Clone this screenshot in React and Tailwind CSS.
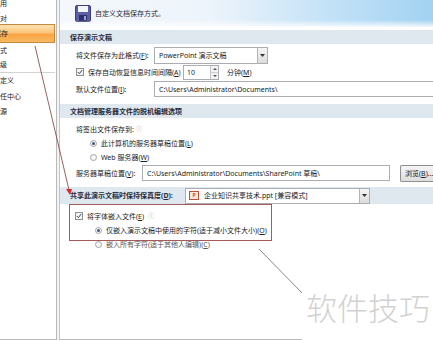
import React from "react";

function Check({ checked = true }) {
  return (
    <span className="inline-flex w-[8px] h-[8px] border border-[#8e8f8f] bg-[#f4f4f4] items-center justify-center shrink-0">
      {checked && (
        <svg width="6" height="6" viewBox="0 0 6 6">
          <path d="M0.8 3 L2.4 4.6 L5.2 1" stroke="#3a4a6a" strokeWidth="1" fill="none" />
        </svg>
      )}
    </span>
  );
}

function Radio({ checked }) {
  return (
    <span className="inline-flex w-[7px] h-[7px] rounded-full border border-[#a4a4a4] bg-[#f6f6f6] items-center justify-center shrink-0">
      {checked && <span className="w-[3px] h-[3px] rounded-full bg-[#3d5a80]" />}
    </span>
  );
}

function DropArrow() {
  return (
    <span className="w-[10px] h-full border-l border-[#b5b5b5] bg-[linear-gradient(180deg,#f6f6f6,#dcdcdc)] flex items-center justify-center shrink-0">
      <svg width="5" height="3" viewBox="0 0 5 3">
        <path d="M0 0 H5 L2.5 3 Z" fill="#333" />
      </svg>
    </span>
  );
}

function SectionHeader({ children, className = "" }) {
  return (
    <div className={"h-[14px] bg-[#dfe7ef] flex items-center pl-[10px] font-bold text-[#1e2c40] " + className}>
      {children}
    </div>
  );
}

function Floppy() {
  return (
    <svg width="16" height="17" viewBox="0 0 16 17">
      <rect x="0.5" y="0.5" width="15" height="16" rx="1.5" fill="#5b5fa6" stroke="#3c3f7c" />
      <rect x="3" y="1" width="10" height="6" fill="#f4f4fb" />
      <rect x="4" y="10" width="8" height="6" fill="#2f3166" />
      <rect x="9" y="11" width="2" height="4" fill="#9aa0d8" />
    </svg>
  );
}

export default function App() {
  return (
    <div className="relative w-[433px] h-[340px] overflow-hidden bg-white flex text-[7px] leading-none text-[#222] font-[family-name:Noto_Sans,Noto_Sans_CJK_SC,sans-serif]">
      {/* left menu */}
      <div className="w-[57px] h-full border-r border-b border-[#b9b9b9] bg-white flex flex-col overflow-hidden shrink-0">
        <div className="-mt-[4px] h-[14px] flex items-center -ml-[7px] whitespace-nowrap">常用</div>
        <div className="mt-px h-[14px] flex items-center -ml-[7px] whitespace-nowrap">校对</div>
        <div className="-mt-px h-[19px] w-[56px] -ml-[1px] border border-[#c58a3c] bg-[linear-gradient(180deg,#fde3b4_0%,#fbc57a_45%,#f7a443_55%,#f9b963_100%)] flex items-center shrink-0">
          <span className="-ml-[6px] whitespace-nowrap">保存</span>
        </div>
        <div className="h-[14px] flex items-center -ml-[7px] whitespace-nowrap">版式</div>
        <div className="h-[14px] flex items-center -ml-[7px] whitespace-nowrap">高级</div>
        <div className="mt-[1px] h-px w-[55px] bg-[#d3d3d3] shrink-0" />
        <div className="h-[14px] flex items-center -ml-[7px] whitespace-nowrap">自定义</div>
        <div className="mt-[2px] h-[14px] flex items-center -ml-[7px] whitespace-nowrap">信任中心</div>
        <div className="mt-[1px] h-[14px] flex items-center -ml-[7px] whitespace-nowrap">资源</div>
      </div>
      <div className="w-[3px] h-full bg-[#f3f3f3] border-r border-[#c4c4c4] shrink-0" />

      {/* right panel */}
      <div className="flex-1 min-w-0 h-full flex flex-col border-b border-[#b9b9b9] bg-white">
        <div className="h-[27px] bg-[linear-gradient(90deg,#f4f8fc_0%,#edf4fb_40%,#c6e3f7_70%,#a2d2f2_100%)] relative flex items-center pl-[15px] gap-[4px]">
          <div className="absolute left-0 right-0 bottom-0 h-[7px] bg-[linear-gradient(180deg,rgba(255,255,255,0),rgba(255,255,255,0.85))]" />
          <Floppy />
          <span className="relative text-[#1f2a3a]">自定义文档保存方式。</span>
        </div>

        <SectionHeader className="mt-[3px]">保存演示文稿</SectionHeader>

        <div className="mt-[3px] h-[17px] flex items-center pl-[16px]">
          <span className="w-[78px]">将文件保存为此格式(<u>F</u>):</span>
          <div className="w-[114px] h-[17px] border border-[#abadb3] bg-white flex items-center">
            <span className="flex-1 pl-[4px]">PowerPoint 演示文稿</span>
            <DropArrow />
          </div>
        </div>

        <div className="h-[16px] flex items-center pl-[16px]">
          <Check />
          <span className="ml-[4px] w-[95px]">保存自动恢复信息时间间隔(<u>A</u>)</span>
          <div className="w-[36px] h-[15px] border border-[#abadb3] bg-white flex items-center">
            <span className="flex-1 pl-[3px]">10</span>
            <span className="w-[8px] h-full border-l border-[#c8c8c8] flex flex-col">
              <span className="flex-1 flex items-center justify-center border-b border-[#d0d0d0] bg-[#f2f2f2]">
                <svg width="4" height="2" viewBox="0 0 4 2"><path d="M0 2 H4 L2 0 Z" fill="#555" /></svg>
              </span>
              <span className="flex-1 flex items-center justify-center bg-[#f2f2f2]">
                <svg width="4" height="2" viewBox="0 0 4 2"><path d="M0 0 H4 L2 2 Z" fill="#555" /></svg>
              </span>
            </span>
          </div>
          <span className="ml-[8px]">分钟(<u>M</u>)</span>
        </div>

        <div className="mt-[1px] h-[16px] flex items-center pl-[16px]">
          <span className="w-[78px] shrink-0">默认文件位置(<u>I</u>):</span>
          <div className="flex-1 h-[16px] border border-[#abadb3] border-r-0 bg-white flex items-center pl-[4px] whitespace-nowrap">
            C:\Users\Administrator\Documents\
          </div>
        </div>

        <SectionHeader className="mt-[7px]">文档管理服务器文件的脱机编辑选项</SectionHeader>

        <div className="mt-[4px] h-[14px] flex items-center pl-[16px] gap-[2px]">
          <span>将签出文件保存到:</span>
          <span className="text-[#9aa6b6] text-[6px]">ⓘ</span>
        </div>
        <div className="h-[14px] flex items-center pl-[30px] gap-[4px]">
          <Radio checked />
          <span>此计算机的服务器草稿位置(<u>L</u>)</span>
        </div>
        <div className="h-[14px] flex items-center pl-[30px] gap-[4px]">
          <Radio />
          <span>Web 服务器(<u>W</u>)</span>
        </div>

        <div className="mt-[1px] h-[16px] flex items-center pl-[16px]">
          <span className="w-[66px] shrink-0">服务器草稿位置(<u>V</u>):</span>
          <div className="w-[248px] shrink-0 h-[16px] border border-[#abadb3] bg-white flex items-center pl-[4px] whitespace-nowrap">
            C:\Users\Administrator\Documents\SharePoint 草稿\
          </div>
          <div className="ml-[10px] flex-1 min-w-0 h-[17px] border border-[#8f8f8f] border-r-0 rounded-l-[2px] bg-[linear-gradient(180deg,#f5f5f5,#dedede)] flex items-center pl-[4px] whitespace-nowrap overflow-hidden">
            浏览(<u>B</u>)...
          </div>
        </div>

        <div className="mt-[6px] h-[17px] bg-[#dfe7ef] flex items-center pl-[10px]">
          <span className="w-[115px] font-bold text-[#1e2c40] whitespace-nowrap">共享此演示文稿时保持保真度(<u>D</u>):</span>
          <div className="w-[185px] h-[16px] border border-[#abadb3] bg-white flex items-center">
            <span className="ml-[3px] w-[10px] h-[9px] border border-[#c0503a] bg-[#fbe6dc] flex items-center justify-center text-[5px] text-[#c0503a] font-bold">P</span>
            <span className="flex-1 pl-[5px]">企业知识共享技术.ppt [兼容模式]</span>
            <DropArrow />
          </div>
        </div>

        <div className="mt-[5px] h-[14px] flex items-center pl-[15px] gap-[4px]">
          <Check />
          <span>将字体嵌入文件(<u>E</u>)</span>
          <span className="text-[#9aa6b6] text-[6px]">ⓘ</span>
        </div>
        <div className="h-[15px] flex items-center pl-[35px] gap-[4px]">
          <Radio checked />
          <span>仅嵌入演示文稿中使用的字符(适于减小文件大小)(<u>O</u>)</span>
        </div>
        <div className="h-[13px] flex items-center pl-[35px] gap-[4px] text-[#555]">
          <Radio />
          <span>嵌入所有字符(适于其他人编辑)(<u>C</u>)</span>
        </div>
      </div>

      {/* red annotation box */}
      <div className="absolute left-[69px] top-[204px] w-[203px] h-[37px] border border-[#a65a5a] pointer-events-none" />

      {/* annotation lines */}
      <svg className="absolute left-0 top-0 pointer-events-none" width="433" height="340" viewBox="0 0 433 340">
        <line x1="35" y1="46" x2="69" y2="190" stroke="#7a3a3a" strokeWidth="0.8" />
        <path d="M66 189 L72 189 L70 195 Z" fill="#d92a2a" />
        <line x1="259" y1="249" x2="303" y2="294" stroke="#555" strokeWidth="0.7" />
      </svg>

      {/* watermark */}
      <div className="absolute left-[302px] top-[284px] w-[131px] h-[56px] bg-white pointer-events-none">
        <div className="mt-[7px] ml-[4px] text-[31px] leading-none text-[#d2d2d2] font-[family-name:Noto_Sans_CJK_SC,sans-serif] font-light">
          软件技巧
        </div>
      </div>
    </div>
  );
}
